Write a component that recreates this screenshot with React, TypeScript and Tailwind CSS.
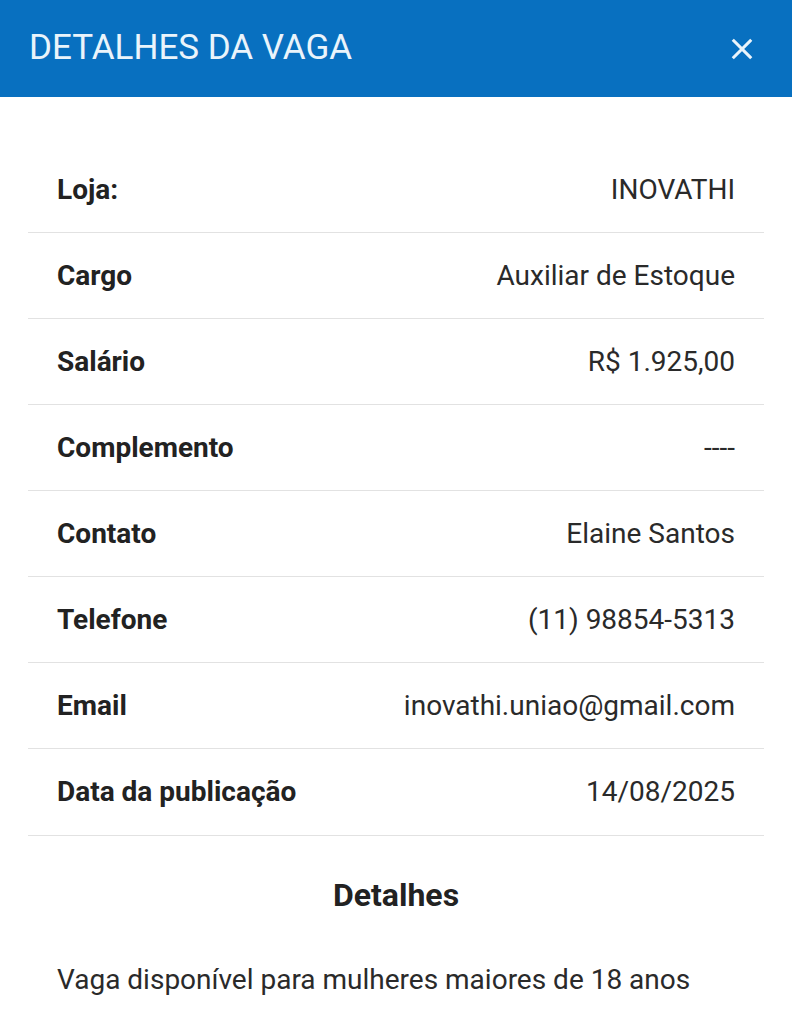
import React from 'react';

interface Field {
  label: string;
  value: string;
}

const fields: Field[] = [
  { label: 'Loja:', value: 'INOVATHI' },
  { label: 'Cargo', value: 'Auxiliar de Estoque' },
  { label: 'Salário', value: 'R$ 1.925,00' },
  { label: 'Complemento', value: '----' },
  { label: 'Contato', value: 'Elaine Santos' },
  { label: 'Telefone', value: '(11) 98854-5313' },
  { label: 'Email', value: 'inovathi.uniao@gmail.com' },
  { label: 'Data da publicação', value: '14/08/2025' },
];

const App: React.FC = () => {
  return (
    <div className="min-h-screen bg-white font-['Roboto',sans-serif]">
      <header className="h-[97px] bg-[#0870c0] pl-[29px] pr-[36px] flex items-center justify-between">
        <h1 className="text-[35px] font-normal text-[#eaf4fb]">DETALHES DA VAGA</h1>
        <button aria-label="Fechar" className="w-[28px] h-[28px] flex items-center justify-center">
          <svg viewBox="0 0 24 24" className="w-[28px] h-[28px]" fill="none" stroke="#eaf4fb" strokeWidth={2.6} strokeLinecap="square">
            <path d="M5 5 L19 19 M19 5 L5 19" />
          </svg>
        </button>
      </header>

      <div className="px-[28px] pt-[50px]">
        <ul className="divide-y divide-[#e2e2e2] border-b border-[#e2e2e2]">
          {fields.map(({ label, value }) => (
            <li key={label} className="h-[86px] px-[29px] flex items-center justify-between">
              <span className="text-[28px] font-bold text-[#222]">{label}</span>
              <span className="text-[28px] text-[#2a2a2a]">{value}</span>
            </li>
          ))}
        </ul>

        <h2 className="mt-[39px] text-center text-[32px] font-bold text-[#222] leading-[40px]">Detalhes</h2>
        <p className="mt-[47px] px-[29px] text-[28px] text-[#2a2a2a] leading-[36px]">
          Vaga disponível para mulheres maiores de 18 anos
        </p>
      </div>
    </div>
  );
};

export default App;
